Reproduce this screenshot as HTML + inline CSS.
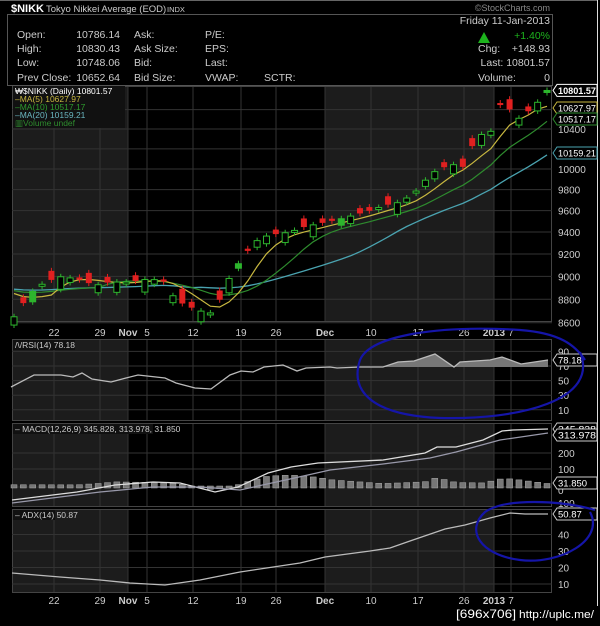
<!DOCTYPE html>
<html><head><meta charset="utf-8">
<style>
html,body{margin:0;padding:0;background:#000;width:600px;height:626px;overflow:hidden}
svg{display:block}
text{font-family:"Liberation Sans",Arial,sans-serif}
</style></head>
<body>
<svg id="s" width="600" height="626" viewBox="0 0 600 626" xmlns="http://www.w3.org/2000/svg">
<rect width="600" height="626" fill="#000"/>
<line x1="0" y1="0.5" x2="598" y2="0.5" stroke="#666"/>
<line x1="597.5" y1="0" x2="597.5" y2="606" stroke="#ddd"/>
<text x="11" y="12" font-size="11" font-weight="bold" fill="#fff">$NIKK</text>
<text x="46" y="12" font-size="9.5" fill="#ccc">Tokyo Nikkei Average (EOD)</text>
<text x="167" y="12" font-size="7.5" fill="#ccc">INDX</text>
<text x="550" y="11" font-size="9" fill="#888" text-anchor="end">©StockCharts.com</text>
<rect x="7.5" y="14.5" width="545" height="71" fill="#000" stroke="#555"/>
<g font-size="10.5" fill="#ccc">
<text x="17" y="38">Open:</text><text x="120" y="38" text-anchor="end">10786.14</text><text x="134" y="38">Ask:</text><text x="205" y="38">P/E:</text>
<text x="17" y="52">High:</text><text x="120" y="52" text-anchor="end">10830.43</text><text x="134" y="52">Ask Size:</text><text x="205" y="52">EPS:</text>
<text x="17" y="66">Low:</text><text x="120" y="66" text-anchor="end">10748.06</text><text x="134" y="66">Bid:</text><text x="205" y="66">Last:</text>
<text x="17" y="81">Prev Close:</text><text x="120" y="81" text-anchor="end">10652.64</text><text x="134" y="81">Bid Size:</text><text x="205" y="81">VWAP:</text><text x="264" y="81">SCTR:</text>
<text x="550" y="24" text-anchor="end">Friday  11-Jan-2013</text>
<text x="550" y="52" text-anchor="end">+148.93</text><text x="478" y="52">Chg:</text>
<text x="550" y="66" text-anchor="end">Last: 10801.57</text>
<text x="478" y="81">Volume:</text><text x="550" y="81" text-anchor="end">0</text>
</g>
<polygon points="478,43 484,32 490,43" fill="#1db41d"/>
<text x="550" y="39" font-size="10.5" fill="#1db41d" text-anchor="end">+1.40%</text>
<g id="g"></g>
<text x="456" y="618" font-size="12" fill="#fff" font-family="DejaVu Sans Mono" textLength="60" lengthAdjust="spacingAndGlyphs">[696x706]</text>
<text x="519" y="618" font-size="11" fill="#fff" textLength="75" lengthAdjust="spacingAndGlyphs">http://uplc.me/</text>
</svg>
<script>
const NS="http://www.w3.org/2000/svg",G=document.getElementById('g');
function el(t,a,txt){const e=document.createElementNS(NS,t);for(const k in a)e.setAttribute(k,a[k]);if(txt!==undefined)e.textContent=txt;G.appendChild(e);return e;}
const L=12,R=552;
const panels=[[86,322],[339,421],[423,507],[509,593]];
const dates=[[54,'22'],[100,'29'],[128,'Nov'],[147,'5'],[193,'12'],[241,'19'],[276,'26'],[325,'Dec'],[371,'10'],[418,'17'],[464,'26'],[494,'2013'],[511,'7']];
panels.forEach(([t,b])=>{
 el('rect',{x:L,y:t,width:R-L,height:b-t,fill:'#000'});
 el('rect',{x:L,y:t,width:128-L,height:b-t,fill:'#1c1c1c'});
 el('rect',{x:325,y:t,width:494-325,height:b-t,fill:'#1c1c1c'});
 dates.forEach(([x])=>el('line',{x1:x,y1:t,x2:x,y2:b,stroke:'#333','stroke-width':1}));
 el('rect',{x:L+.5,y:t+.5,width:R-L-1,height:b-t-1,fill:'none',stroke:'#444'});
});
function hline(y,b){el('line',{x1:L,y1:y,x2:R,y2:y,stroke:'#333'});}
function lab(y,t){el('text',{x:558,y:y+4,'font-size':10,fill:'#ccc'},t);}
function box(y,t,c,b){el('path',{d:`M553 ${y} l4 -6 h40 v12 h-40 z`,fill:'#000',stroke:c||'#ccc'});const a={x:558,y:y+3.5,'font-size':9.5,fill:'#fff','font-weight':b?'bold':'normal'};if(t.length>6){a.textLength=38;a.lengthAdjust='spacingAndGlyphs';}el('text',a,t);}
// price
const py=p=>169-1019*Math.log(p/10000);
[8600,8800,9000,9200,9400,9600,9800,10000,10200,10400,10600].forEach(p=>{hline(py(p));});
[8600,8800,9000,9200,9400,9600,9800,10000,10400].forEach(p=>lab(py(p),''+p));
const kp=[[14,8650],[30,8850],[45,8950],[62,9000],[80,8970],[95,8920],[110,8950],[130,8950],[150,8980],[165,8950],[175,8800],[185,8750],[200,8700],[212,8680],[220,8800],[230,9000],[245,9200],[260,9350],[275,9380],[290,9400],[305,9450],[320,9480],[340,9520],[355,9560],[370,9600],[385,9650],[400,9680],[412,9750],[420,9820],[430,9950],[440,10000],[452,10050],[462,10000],[470,10200],[482,10350],[492,10380],[500,10650],[510,10600],[520,10500],[530,10600],[538,10680],[547,10801]];
function interp(pts,x){for(let i=1;i<pts.length;i++){if(x<=pts[i][0]){const a=pts[i-1],b=pts[i];return a[1]+(b[1]-a[1])*(x-a[0])/(b[0]-a[0]);}}return pts[pts.length-1][1];}
const N=58,xs=[],cl=[];for(let i=0;i<N;i++){const x=14+i*(533/57);xs.push(x);cl.push(interp(kp,x));}
const hist=[];for(let i=0;i<20;i++)hist.push(8900);const all=hist.concat(cl);
function ma(n){return cl.map((_,i)=>{let s=0;for(let k=0;k<n;k++)s+=all[i+20-k];return s/n;});}
function line(xsA,ys,c,w){el('polyline',{points:xsA.map((x,i)=>x.toFixed(1)+','+ys[i].toFixed(1)).join(' '),fill:'none',stroke:c,'stroke-width':w||1});}
line(xs,ma(20).map(py),'#4aa3b0',1.3);
line(xs,ma(10).map(py),'#2e8b2e',1.2);
line(xs,ma(5).map(py),'#c8b840',1.2);
for(let i=0;i<N;i++){
 const c=cl[i];const prev=i?cl[i-1]:c-40;const pat=[70,-50,90,15,-80,110,40,-20,60][i%9];
 let o=c-pat; if(i%5==3)o=c+60+ (prev-c);
 const up=c>=o,x=xs[i];const y1=py(Math.max(o,c)),y2=py(Math.min(o,c));const h=Math.max(2,y2-y1);
 el('line',{x1:x,y1:y1-3,x2:x,y2:y1+h+3,stroke:up?'#2db52d':'#e02020'});
 if(up)el('rect',{x:x-3,y:y1,width:6,height:h,fill:(i%9==4||i%11==2)?'#2db52d':'#000',stroke:'#2db52d'});
 else el('rect',{x:x-3,y:y1,width:6,height:h,fill:'#e02020'});
}
box(py(10801.57),'10801.57','#fff',1);box(108,'10627.97','#c8b840');box(119,'10517.17','#2e8b2e');box(153,'10159.21','#4aa3b0');
el('rect',{x:13,y:86,width:112,height:42,fill:'#111'});
el('text',{x:15,y:94,'font-size':8.5,fill:'#fff'},'₩$NIKK (Daily) 10801.57');
el('text',{x:15,y:102,'font-size':8.5,fill:'#c8b840'},'–MA(5) 10627.97');
el('text',{x:15,y:110,'font-size':8.5,fill:'#2e9b2e'},'–MA(10) 10517.17');
el('text',{x:15,y:118,'font-size':8.5,fill:'#6ab6c0'},'–MA(20) 10159.21');
el('text',{x:15,y:126,'font-size':8.5,fill:'#2e8b2e'},'▥Volume undef');
function dl(y){dates.forEach(([x,t])=>el('text',{x:x,y:y,'font-size':10,fill:'#ccc','text-anchor':'middle','font-weight':(t=='Nov'||t=='Dec'||t=='2013')?'bold':'normal'},t));}
dl(336);dl(604);
// RSI
const ry=v=>366-(v-70)*0.73;
[90,70,50,30,10].forEach(v=>{hline(ry(v));lab(ry(v),''+v);});
const rsi=[[11,387],[34,375],[61,375],[73,377],[82,373],[92,379],[111,382],[126,378],[138,375],[165,378],[176,383],[195,388],[211,389],[230,375],[241,371],[253,372],[264,367],[283,365],[297,371],[306,368],[330,367],[337,368],[360,367],[383,367],[398,362],[414,361],[435,354],[454,367],[460,362],[490,360],[502,357],[521,364],[548,360]];
el('polygon',{points:rsi.filter(p=>p[0]>=383).map(p=>p.join(',')).join(' ')+' 548,367 383,367',fill:'#777'});
el('polyline',{points:rsi.map(p=>p.join(',')).join(' '),fill:'none',stroke:'#bbb','stroke-width':1.3});
box(360,'78.18');
el('rect',{x:13,y:340,width:62,height:10,fill:'#111'});
el('text',{x:15,y:348,'font-size':8.5,fill:'#ccc'},'/\\/RSI(14) 78.18');
// MACD
[453,469,487].forEach(y=>hline(y));lab(453,'200');lab(469,'100');lab(490,'0');
const m1=[[12,500],[77,492],[115,485],[153,482],[180,483],[215,492],[238,487],[268,473],[291,467],[318,463],[383,460],[425,453],[437,447],[456,447],[483,440],[502,431],[513,430],[548,429]];
const m2=[[12,503],[100,492],[153,487],[200,487],[240,490],[290,479],[330,470],[383,464],[430,458],[456,452],[500,440],[548,433]];
for(let i=0;i<N;i++){const x=xs[i];const d=interp(m2,x)-interp(m1,x);const h=Math.max(2,Math.abs(d)*1.1);const top=d>0?488-h:486;el('rect',{x:x-3,y:top,width:6,height:h,fill:'#777',stroke:'#aaa','stroke-width':.5});}
line(m1.map(p=>p[0]),m1.map(p=>p[1]),'#ddd',1.3);
line(m2.map(p=>p[0]),m2.map(p=>p[1]),'#99a',1.2);
box(429,'345.828');box(435,'313.978');box(483,'31.850');
el('rect',{x:13,y:424,width:140,height:10,fill:'#111'});
el('text',{x:15,y:432,'font-size':8.5,fill:'#ccc'},'– MACD(12,26,9) 345.828, 313.978, 31.850');
// ADX
const ay=v=>584-(v-10)*1.65;
[40,30,20,10].forEach(v=>{hline(ay(v));lab(ay(v),''+v);});lab(503,'100');
const adx=[[12,573],[60,577],[100,580],[130,583],[165,585],[200,580],[240,572],[300,563],[325,557],[370,551],[390,548],[410,541],[445,529],[465,525],[490,518],[510,513],[525,514],[548,514]];
line(adx.map(p=>p[0]),adx.map(p=>p[1]),'#bbb',1.3);
box(514,'50.87');
el('rect',{x:13,y:510,width:42,height:10,fill:'#111'});
el('text',{x:15,y:518,'font-size':8.5,fill:'#ccc'},'– ADX(14) 50.87');
// blue scribbles
el('path',{d:'M580 352 C600 400 520 420 440 418 C370 415 350 390 360 360 C370 335 440 325 520 330 C560 333 575 345 585 360',fill:'none',stroke:'#1515a8','stroke-width':2.2});
el('path',{d:'M590 512 C605 540 560 565 520 560 C480 555 465 530 485 512 C505 498 560 500 595 510',fill:'none',stroke:'#1515a8','stroke-width':2.2});
</script>
</body></html>
